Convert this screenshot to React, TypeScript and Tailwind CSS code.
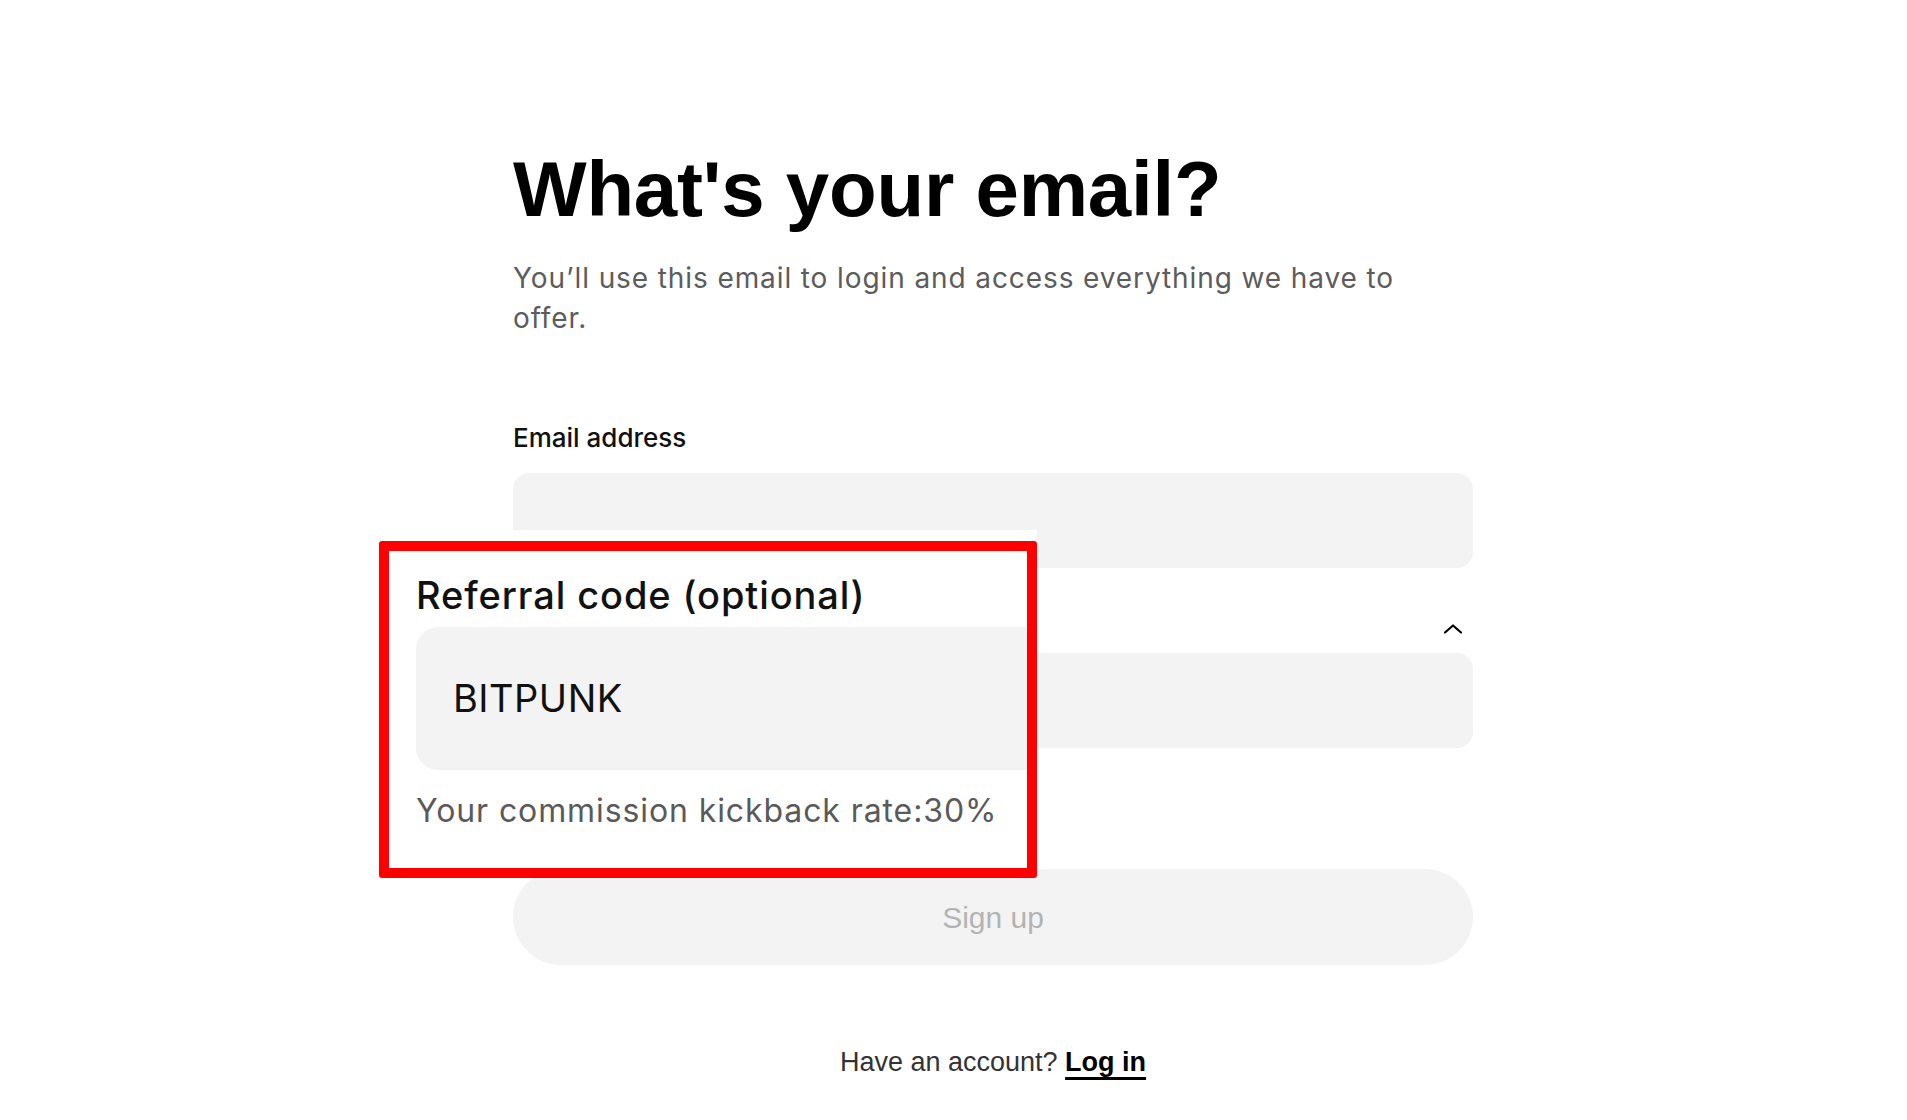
import React from 'react';

const ChevronUp: React.FC = () => (
  <svg width="20" height="12" viewBox="0 0 20 12" fill="none" className="mr-[10px]">
    <path d="M2 9.5L10 2.5L18 9.5" stroke="#000" strokeWidth="2.2" strokeLinecap="round" strokeLinejoin="round" />
  </svg>
);

// Annotated referral-code callout pasted over the form
const ReferralCallout: React.FC = () => (
  <div className="absolute left-[379px] top-[530px] bg-white pt-[11px]">
    <div className="w-[658px] h-[337px] border-[10px] border-[#ff0000] rounded-[3px] bg-white overflow-hidden pl-[27px] pt-[22px]">
      <div className="text-[38px] leading-[44px] font-medium text-[#111] tracking-[0.9px]" style={{ fontFamily: 'Inter, sans-serif' }}>
        Referral code (optional)
      </div>
      <div className="mt-[10px] w-[800px] h-[143px] bg-[#f3f3f3] rounded-[22px] flex items-center pl-[37px]">
        <span className="text-[38px] text-[#111] tracking-[0.5px]" style={{ fontFamily: 'Inter, sans-serif' }}>BITPUNK</span>
      </div>
      <div className="mt-[21px] text-[32px] leading-[40px] text-[#5a5a5a] tracking-[0.9px]" style={{ fontFamily: 'Inter, sans-serif' }}>
        Your commission kickback rate:30%
      </div>
    </div>
  </div>
);

const App: React.FC = () => {
  return (
    <div className="relative min-h-[1120px] bg-white" style={{ fontFamily: '"Liberation Sans", Arial, sans-serif' }}>
      <div className="ml-[513px] w-[960px] pt-[150px]">
        <h1 className="text-[78px] leading-none font-bold text-black tracking-[-0.2px]">What's your email?</h1>
        <p className="mt-[30px] max-w-[900px] text-[28px] leading-[40px] text-[#5c5c5c] tracking-[0.9px]" style={{ fontFamily: 'Inter, sans-serif' }}>
          You’ll use this email to login and access everything we have to offer.
        </p>

        <label className="block mt-[84px] text-[26px] leading-[32px] font-medium text-[#111]" style={{ fontFamily: 'Inter, sans-serif' }}>
          Email address
        </label>
        <div className="mt-[19px] h-[95px] rounded-2xl bg-[#f3f3f3]" />

        {/* referral section header (label hidden under the callout) */}
        <div className="mt-[45px] h-8 flex items-center justify-end">
          <ChevronUp />
        </div>
        <div className="mt-2 h-[95px] rounded-2xl bg-[#f3f3f3]" />

        <button className="mt-[121px] w-full h-[96px] rounded-full bg-[#f3f3f3] text-[30px] text-[#b3b3b3]">
          Sign up
        </button>

        <div className="mt-[79px] text-center text-[27px] leading-[36px] text-[#333]">
          Have an account?{' '}
          <a className="font-bold text-black underline decoration-[3px] underline-offset-[6px]">Log in</a>
        </div>
      </div>

      <ReferralCallout />
    </div>
  );
};

export default App;
